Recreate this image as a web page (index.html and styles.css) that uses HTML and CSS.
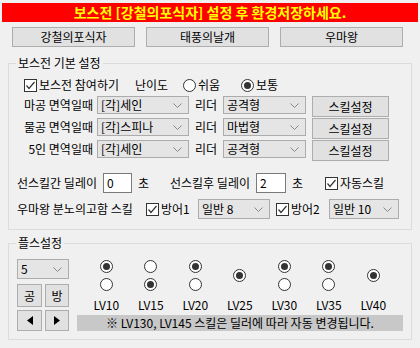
FILE: index.html
```html
<!DOCTYPE html>
<html>
<head>
<meta charset="utf-8">
<link rel="stylesheet" href="styles.css">
</head>
<body>
<div class="banner">보스전 [강철의포식자] 설정 후 환경저장하세요.</div>
<div class="tabs">
  <div class="btn tab">강철의포식자</div>
  <div class="btn tab">태풍의날개</div>
  <div class="btn tab">우마왕</div>
</div>

<fieldset class="group g1">
  <legend>보스전 기본 설정</legend>
  <div class="row ra">
    <span class="check"><svg width="11" height="11" viewBox="0 0 11 11"><polyline points="1.5,5.5 4,8.5 9.5,2" fill="none" stroke="#333" stroke-width="1.2"/></svg></span>
    <span class="t-join">보스전 참여하기</span>
    <span class="t-diff">난이도</span>
    <span class="radio"></span>
    <span class="t-easy">쉬움</span>
    <span class="radio on"></span>
    <span class="t-norm">보통</span>
  </div>

  <div class="row rb">
    <span class="rlabel">마공 면역일때</span>
    <div class="combo c-dealer"><span>[각]세인</span><svg width="9" height="5" viewBox="0 0 9 5"><polyline points="0.5,0.5 4.5,4.5 8.5,0.5" fill="none" stroke="#888" stroke-width="1"/></svg></div>
    <span class="t-leader">리더</span>
    <div class="combo c-type"><span>공격형</span><svg width="9" height="5" viewBox="0 0 9 5"><polyline points="0.5,0.5 4.5,4.5 8.5,0.5" fill="none" stroke="#888" stroke-width="1"/></svg></div>
    <div class="btn skill">스킬설정</div>
  </div>
  <div class="row rb">
    <span class="rlabel">물공 면역일때</span>
    <div class="combo c-dealer"><span>[각]스피나</span><svg width="9" height="5" viewBox="0 0 9 5"><polyline points="0.5,0.5 4.5,4.5 8.5,0.5" fill="none" stroke="#888" stroke-width="1"/></svg></div>
    <span class="t-leader">리더</span>
    <div class="combo c-type"><span>마법형</span><svg width="9" height="5" viewBox="0 0 9 5"><polyline points="0.5,0.5 4.5,4.5 8.5,0.5" fill="none" stroke="#888" stroke-width="1"/></svg></div>
    <div class="btn skill">스킬설정</div>
  </div>
  <div class="row rb">
    <span class="rlabel">5인 면역일때</span>
    <div class="combo c-dealer"><span>[각]세인</span><svg width="9" height="5" viewBox="0 0 9 5"><polyline points="0.5,0.5 4.5,4.5 8.5,0.5" fill="none" stroke="#888" stroke-width="1"/></svg></div>
    <span class="t-leader">리더</span>
    <div class="combo c-type"><span>공격형</span><svg width="9" height="5" viewBox="0 0 9 5"><polyline points="0.5,0.5 4.5,4.5 8.5,0.5" fill="none" stroke="#888" stroke-width="1"/></svg></div>
    <div class="btn skill">스킬설정</div>
  </div>

  <div class="row re">
    <span class="t-delay1">선스킬간 딜레이</span>
    <span class="textbox tb1">0</span>
    <span class="t-sec1">초</span>
    <span class="t-delay2">선스킬후 딜레이</span>
    <span class="textbox tb2">2</span>
    <span class="t-sec2">초</span>
    <span class="check"><svg width="11" height="11" viewBox="0 0 11 11"><polyline points="1.5,5.5 4,8.5 9.5,2" fill="none" stroke="#333" stroke-width="1.2"/></svg></span>
    <span class="t-auto">자동스킬</span>
  </div>

  <div class="row rf">
    <span class="t-roar">우마왕 분노의고함 스킬</span>
    <span class="check"><svg width="11" height="11" viewBox="0 0 11 11"><polyline points="1.5,5.5 4,8.5 9.5,2" fill="none" stroke="#333" stroke-width="1.2"/></svg></span>
    <span class="t-def1">방어1</span>
    <div class="combo c-g1"><span>일반 8</span><svg width="9" height="5" viewBox="0 0 9 5"><polyline points="0.5,0.5 4.5,4.5 8.5,0.5" fill="none" stroke="#888" stroke-width="1"/></svg></div>
    <span class="check ck-def2"><svg width="11" height="11" viewBox="0 0 11 11"><polyline points="1.5,5.5 4,8.5 9.5,2" fill="none" stroke="#333" stroke-width="1.2"/></svg></span>
    <span class="t-def2">방어2</span>
    <div class="combo c-g2"><span>일반 10</span><svg width="9" height="5" viewBox="0 0 9 5"><polyline points="0.5,0.5 4.5,4.5 8.5,0.5" fill="none" stroke="#888" stroke-width="1"/></svg></div>
  </div>
</fieldset>

<fieldset class="group g2">
  <legend>플스설정</legend>
  <div class="g2-body">
    <div class="leftcol">
      <div class="combo c-num"><span>5</span><svg width="9" height="5" viewBox="0 0 9 5"><polyline points="0.5,0.5 4.5,4.5 8.5,0.5" fill="none" stroke="#888" stroke-width="1"/></svg></div>
      <div class="pair p1">
        <div class="btn sq sq-l">공</div>
        <div class="btn sq sq-r">방</div>
      </div>
      <div class="pair p2">
        <div class="btn sq sq-l"><svg width="6" height="9" viewBox="0 0 6 9"><polygon points="6,0 6,9 0,4.5" fill="#000"/></svg></div>
        <div class="btn sq sq-r"><svg width="6" height="9" viewBox="0 0 6 9"><polygon points="0,0 0,9 6,4.5" fill="#000"/></svg></div>
      </div>
    </div>
    <div class="rightcol">
      <div class="lvgrid">
        <div class="lvcol"><div class="rad-area"><span class="radio on"></span><span class="radio"></span></div><span class="lv">LV10</span></div>
        <div class="lvcol"><div class="rad-area"><span class="radio"></span><span class="radio on"></span></div><span class="lv">LV15</span></div>
        <div class="lvcol"><div class="rad-area"><span class="radio on"></span><span class="radio"></span></div><span class="lv">LV20</span></div>
        <div class="lvcol"><div class="rad-area"><span class="radio on"></span></div><span class="lv">LV25</span></div>
        <div class="lvcol"><div class="rad-area"><span class="radio on"></span><span class="radio"></span></div><span class="lv">LV30</span></div>
        <div class="lvcol"><div class="rad-area"><span class="radio on"></span><span class="radio"></span></div><span class="lv">LV35</span></div>
        <div class="lvcol"><div class="rad-area"><span class="radio on"></span></div><span class="lv">LV40</span></div>
      </div>
      <div class="note">※ LV130, LV145 스킬은 딜러에 따라 자동 변경됩니다.</div>
    </div>
  </div>
</fieldset>
</body>
</html>
```

FILE: styles.css
```css
* { box-sizing: border-box; }
html, body { margin: 0; padding: 0; }
body {
  width: 420px;
  height: 348px;
  overflow: hidden;
  background: #f0f0f0;
  color: #000;
  font-family: "Noto Sans CJK KR", "Noto Sans", sans-serif;
  font-size: 12px;
  line-height: 14px;
}

.banner {
  margin: 3px 2px 0;
  height: 19px;
  background: #ff0000;
  color: #ffff00;
  font-weight: bold;
  font-size: 14px;
  line-height: 19px;
  text-align: center;
}

.tabs { display: flex; gap: 11px; margin: 5px 0 0 12px; }

.btn {
  display: flex;
  align-items: center;
  justify-content: center;
  background: #e1e1e1;
  border: 1px solid #adadad;
  flex: none;
}
.tab { width: 123px; height: 20px; }

.group {
  border: 1px solid #dcdcdc;
  margin: 9px 0 0 8px;
  width: 404px;
  padding: 0;
  min-width: 0;
}
.group legend { padding: 0 2px; margin-left: 7px; line-height: 14px; }
.g1 { padding-bottom: 10px; }
.g2 { margin-top: 6px; padding-bottom: 8px; }

.row { display: flex; align-items: center; white-space: nowrap; }
.row > span { flex: none; }

.check {
  width: 13px; height: 13px;
  border: 1px solid #333;
  background: #fff;
  display: inline-flex;
  flex: none;
}
.radio {
  width: 13px; height: 13px;
  border: 1px solid #333;
  border-radius: 50%;
  background: #fff;
  display: inline-flex;
  align-items: center;
  justify-content: center;
  flex: none;
}
.radio.on::after {
  content: "";
  width: 7px; height: 7px;
  border-radius: 50%;
  background: #333;
}

.combo {
  display: flex;
  align-items: center;
  justify-content: space-between;
  height: 18px;
  border: 1px solid #acacac;
  background: #e5e5e5;
  padding: 0 6px 0 3px;
  flex: none;
}
.combo svg { flex: none; }

.textbox {
  display: inline-flex;
  align-items: center;
  height: 20px;
  background: #fff;
  border: 1px solid #7a7a7a;
  padding-left: 3px;
}

/* row A */
.ra { height: 22px; margin-top: 4px; padding-left: 15px; }
.t-join { width: 98px; padding-left: 2px; }
.t-diff { width: 48px; }
.t-easy { width: 45px; padding-left: 2px; }
.t-norm { padding-left: 2px; }

/* rows B-D */
.rb { height: 22px; padding-left: 7px; align-items: flex-start; }
.rlabel { width: 77px; text-align: right; line-height: 18px; }
.c-dealer { width: 92px; margin-left: 4px; }
.t-leader { width: 34px; padding-left: 6px; line-height: 18px; margin-left: 0; }
.t-leader { margin-left: 0; }
.c-type { width: 83px; }
.skill { width: 77px; height: 21px; margin-left: 6px; }

/* row E */
.re { height: 20px; margin-top: 11px; padding-left: 8px; }
.t-delay1 { width: 86px; }
.tb1 { width: 29px; }
.t-sec1 { width: 38px; padding-left: 6px; }
.t-delay2 { width: 86px; }
.tb2 { width: 30px; }
.t-sec2 { width: 39px; padding-left: 6px; }
.t-auto { padding-left: 2px; }

/* row F */
.rf { height: 20px; margin-top: 6px; padding-left: 8px; }
.t-roar { width: 129px; }
.t-def1 { width: 39px; padding-left: 2px; }
.c-g1 { width: 72px; height: 20px; }
.ck-def2 { margin-left: 6px; }
.t-def2 { width: 40px; padding-left: 2px; }
.c-g2 { width: 70px; height: 20px; }

/* group 2 */
.g2-body { display: flex; padding: 9px 0 0 8px; }
.leftcol { width: 52px; display: flex; flex-direction: column; }
.c-num { width: 52px; height: 20px; }
.pair { display: flex; gap: 3px; }
.p1 { margin-top: 5px; }
.p1 .sq { height: 23px; }
.p2 { margin-top: 3px; }
.p2 .sq { height: 21px; }
.sq-l { width: 25px; }
.sq-r { width: 24px; }

.rightcol { margin-left: 8px; width: 326px; display: flex; flex-direction: column; }
.lvgrid { display: flex; padding-left: 7px; margin-top: 1px; }
.lvcol { width: 44.5px; display: flex; flex-direction: column; align-items: center; }
.rad-area { height: 31px; display: flex; flex-direction: column; justify-content: center; gap: 5px; }
.lv { margin-top: 7px; line-height: 14px; }
.note {
  margin-top: 3px;
  height: 16px;
  line-height: 16px;
  background: #c8c8c8;
  text-align: center;
  white-space: nowrap;
}
```
